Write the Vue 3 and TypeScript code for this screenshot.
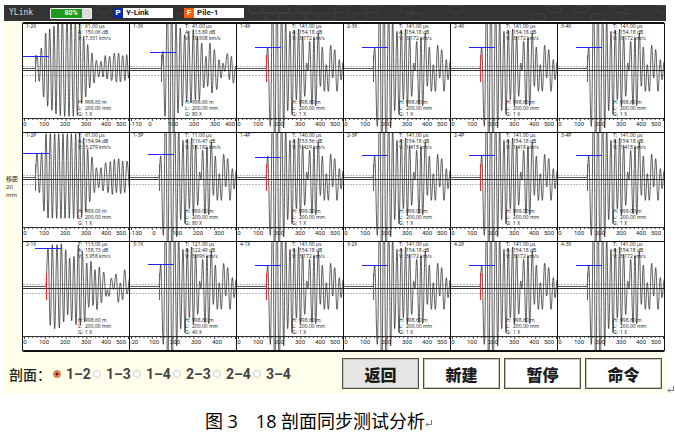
<script setup lang="ts">
import { ref } from 'vue'

type Extremum = [number, number]
interface Tick {
  x: number
  label: string
}
interface Channel {
  name: string
  time: string
  amp: string
  vel: string
  depth: string
  gain: string
  wave: string
  level: number
  levelX: number
  onset: number
  ticks: Tick[]
}

const W = 106
const MID = 46

/* Extrema of each trace: [position, amplitude], three units to a pixel. */
const waves: Record<string, Extremum[]> = {
  early: [[36, 3], [42, 40], [49, -37], [55, 63], [62, -84], [68, 108], [74, -112], [80, 120], [87, -124], [93, 128], [99, -135], [105, 160], [112, -140], [118, 165], [125, -142], [132, 165], [138, -142], [144, 160], [151, -142], [157, 150], [163, -139], [170, 133], [176, -102], [182, 98], [188, -84], [194, 73], [200, -57], [207, 48], [213, -42], [220, 26], [227, -24], [234, 23], [240, -24], [247, 40], [252, -30], [260, 38], [266, -35], [274, 48], [280, -39], [287, 48], [292, -39], [299, 40], [306, -35], [311, 43], [317, -27], [321, 0]],
  flat: [[36, 3], [42, 73], [49, -44], [56, 76], [63, -99], [69, 133], [75, -120], [82, 133], [88, -121], [95, 133], [101, -121], [107, 133], [114, -121], [120, 133], [126, -121], [133, 133], [139, -121], [145, 133], [152, -121], [158, 133], [164, -121], [170, 133], [176, -118], [182, 121], [188, -101], [194, 86], [200, -71], [207, 63], [214, -44], [220, 31], [227, -29], [234, 31], [240, -39], [248, 46], [255, -44], [262, 49], [268, -49], [274, 56], [280, -44], [287, 58], [293, -47], [299, 51], [305, -44], [312, 51], [321, -40]],
  late: [[68, 3], [75, 115], [82, -115], [88, 127], [95, -125], [102, 127], [109, -123], [115, 130], [122, -105], [128, 112], [134, -83], [140, 87], [146, -101], [153, 92], [159, -113], [166, 127], [172, -115], [178, 107], [185, -105], [191, 72], [197, -61], [204, 77], [210, -56], [216, 52], [222, -68], [229, 60], [235, -48], [242, 45], [249, -28], [253, -8], [258, -28], [265, 27], [272, -8], [279, 39], [286, -46], [292, 12], [299, -38], [305, 52], [312, -21], [321, 30]],
  near: [[94, 3], [99, 53], [105, -142], [112, 190], [119, -260], [125, 230], [131, -260], [138, 150], [144, -132], [151, 123], [157, -112], [164, 103], [170, -97], [176, 113], [183, -102], [190, 118], [196, -92], [202, 98], [208, -92], [215, 78], [221, -57], [228, 38], [233, -52], [240, 78], [246, -72], [253, 58], [260, -62], [267, 28], [273, -27], [279, 18], [284, -7], [292, 46], [298, -32], [304, 38], [310, -42], [317, 8], [321, -10]],
  cross: [[87, 3], [92, 66], [100, -172], [107, 230], [113, -270], [120, 270], [126, -270], [134, 190], [140, -177], [146, 150], [152, -125], [159, 113], [165, -137], [172, 116], [178, -92], [185, 120], [190, -112], [197, 98], [203, -82], [209, 18], [213, -6], [218, 83], [225, -107], [231, 93], [236, -110], [244, 108], [250, -52], [256, 66], [262, -67], [268, 13], [274, -67], [281, 71], [287, -27], [293, 58], [300, -67], [307, 28], [312, -32], [319, 23]],
}

function tracePath(points: Extremum[]): string {
  let px = points[0][0] / 3
  let py = MID - 1.5
  let d = `M0 ${py} H${px}`
  for (const [ux, uy] of points.slice(1)) {
    const x = ux / 3
    const y = MID - 1 - uy / 3
    const bend = (x - px) * 0.42
    d += ` C${(px + bend).toFixed(2)} ${py.toFixed(2)} ${(x - bend).toFixed(2)} ${y.toFixed(2)} ${x.toFixed(2)} ${y.toFixed(2)}`
    px = x
    py = y
  }
  return d
}

const paths = Object.fromEntries(Object.entries(waves).map(([key, pts]) => [key, tracePath(pts)]))

const scale = (pairs: [number, string][]): Tick[] => pairs.map(([x, label]) => ({ x, label }))
const standard = scale([[2, '0'], [21, '100'], [42, '200'], [63, '300'], [83, '400'], [98, '500']])

function channel(name: string, time: string, amp: string, vel: string, depth: string, extra: Partial<Channel> = {}): Channel {
  return { name, time, amp, vel, depth, gain: '1 X', wave: 'cross', level: 23, levelX: 18, onset: 29, ticks: standard, ...extra }
}

const channels: Channel[] = [
  channel('1-2X', '61.00', '150.06', '7.331', '998.60', { wave: 'early', level: 32, levelX: 0, onset: 12 }),
  channel('1-3X', '41.00', '113.89', '10.908', '998.60', { wave: 'near', gain: '80 X', level: 28, levelX: 20, onset: 31, ticks: scale([[6, '-110'], [20, '0'], [43, '100'], [64, '200'], [85, '300'], [100, '400']]) }),
  channel('1-4X', '141.00', '154.18', '3.172', '998.60'),
  channel('2-3X', '141.00', '154.18', '3.172', '998.60'),
  channel('2-4X', '141.00', '154.18', '3.172', '998.60'),
  channel('3-4X', '141.00', '154.18', '3.172', '998.60'),
  channel('1-2P', '61.00', '154.94', '3.279', '999.00', { wave: 'flat', level: 20, levelX: 0, onset: 12 }),
  channel('1-3P', '11.00', '116.47', '18.182', '999.00', { gain: '80 X', level: 21, ticks: scale([[6, '-130'], [24, '0'], [47, '100'], [68, '200'], [89, '300']]) }),
  channel('1-4P', '140.00', '153.56', '1.429', '999.00', { level: 24 }),
  channel('2-3P', '141.00', '154.18', '1.418', '999.00', { level: 22 }),
  channel('2-4P', '141.00', '154.18', '1.418', '999.00', { level: 22 }),
  channel('3-4P', '141.00', '154.18', '1.418', '999.00', { level: 22 }),
  channel('2-1X', '113.00', '158.73', '3.958', '998.60', { wave: 'late', level: 6, levelX: 12, onset: 23 }),
  channel('3-1X', '121.00', '122.49', '3.696', '998.60', { gain: '40 X', level: 22, ticks: scale([[4, '-20'], [24, '100'], [45, '200'], [66, '300'], [87, '400']]) }),
  channel('4-1X', '141.00', '154.18', '3.172', '998.60'),
  channel('3-2X', '141.00', '154.18', '3.172', '998.60'),
  channel('4-2X', '141.00', '154.18', '3.172', '998.60'),
  channel('4-3X', '141.00', '154.18', '3.172', '998.60'),
]

function readout(c: Channel): { key: string; value: string; y: number }[] {
  return [
    { key: 'T:', value: `${c.time} µs`, y: 4 },
    { key: 'A:', value: `${c.amp} dB`, y: 10 },
    { key: 'V:', value: `${c.vel} km/s`, y: 16 },
    { key: 'H:', value: `${c.depth} m`, y: 80 },
    { key: 'L:', value: '200.00 mm', y: 86 },
    { key: 'G:', value: c.gain, y: 92 },
  ]
}

const minorTicks = Array.from({ length: 26 }, (_, i) => i)

const sections = ['1–2', '1–3', '1–4', '2–3', '2–4', '3–4']
const section = ref('1–2')
const actions = ['返回', '新建', '暂停', '命令']

/* Outlined tiles in the header's texture: [x, row]. */
const tiles: [number, number][] = [
  [97, 0], [176, 1], [248, 0], [252, 1], [262, 0], [266, 1], [275, 0], [279, 1], [292, 1], [297, 0], [306, 1], [322, 1],
  [335, 0], [353, 1], [365, 0], [400, 0], [409, 1], [449, 0], [531, 1], [547, 0], [574, 0], [591, 1], [612, 0], [622, 1], [657, 0],
]
</script>

<template>
  <main class="page">
    <div class="figure">
      <section class="device">
        <header class="bar">
          <svg class="texture" viewBox="0 0 662 16" preserveAspectRatio="xMinYMin slice" aria-hidden="true">
            <rect v-for="([x, row], i) in tiles" :key="i" :x="x - 3.5" :y="row * 8 + 0.5" width="13" height="7" rx="1" />
          </svg>
          <span class="brand">YLink</span>
          <span class="battery"><span class="charge"></span><span class="percent">80%</span></span>
          <span class="tag project"><b>P</b><span>Y-Link</span></span>
          <span class="tag file"><b>F</b><span>Pile-1</span></span>
        </header>

        <div class="body">
          <div class="step"><span>移距</span><span>20</span><span>mm</span></div>
          <div class="plots">
            <svg v-for="c in channels" :key="c.name" class="plot" :viewBox="`0 0 ${W} 108`" role="img" :aria-label="c.name">
              <line class="guide" x1="0" x2="106" y1="42.5" y2="42.5" />
              <line class="guide" x1="0" x2="106" y1="51.5" y2="51.5" />
              <line class="axis" x1="0" x2="106" y1="46.5" y2="46.5" />
              <line class="axis" x1="0" x2="106" y1="94.5" y2="94.5" />
              <path class="ticks" :d="minorTicks.map((i) => `M${i * 4.16 + 1.5} 95v${i % 5 ? 1 : 2}`).join('')" />
              <text v-for="t in c.ticks" :key="t.label" class="scale" :x="t.x" y="102">{{ t.label }}</text>
              <path class="trace" :d="paths[c.wave]" />
              <line class="onset" :x1="c.onset + 0.5" :x2="c.onset + 0.5" y1="31" y2="58" />
              <line class="level" :x1="c.levelX" :x2="c.levelX + 26" :y1="c.level + 0.5" :y2="c.level + 0.5" />
              <text class="small" x="3" y="4">{{ c.name }}</text>
              <template v-for="r in readout(c)" :key="r.key">
                <text class="small" x="55" :y="r.y">{{ r.key }}</text>
                <text class="small" x="62" :y="r.y">{{ r.value }}</text>
              </template>
            </svg>
          </div>
        </div>

        <footer class="controls">
          <div class="sections" role="radiogroup" aria-labelledby="sections-title">
            <span id="sections-title" class="title">剖面：</span>
            <label v-for="s in sections" :key="s">
              <input v-model="section" type="radio" name="section" :value="s" />{{ s }}
            </label>
          </div>
          <div class="actions">
            <button v-for="a in actions" :key="a" type="button" :class="{ active: a === '返回' }">{{ a }}</button>
          </div>
        </footer>
      </section>
      <svg class="mark" viewBox="0 0 7 8" aria-hidden="true"><path d="M6.5 0v4.5H1M3 2.5l-2 2 2 2" /></svg>
    </div>
    <p class="caption">
      图 3　18 剖面同步测试分析<svg class="mark" viewBox="0 0 7 8" aria-hidden="true"><path d="M6.5 0v4.5H1M3 2.5l-2 2 2 2" /></svg>
    </p>
  </main>
</template>

<style>
body {
  margin: 0;
  background: #fff;
}
</style>

<style scoped>
.page {
  padding: 5px 1px 0 4px;
  font-family: "Open Sans", "Noto Sans CJK SC", sans-serif;
}
.figure {
  display: flex;
  align-items: flex-end;
  gap: 1px;
}
.device {
  flex: 1;
  min-width: 0;
  background: #ffffec;
}
.bar {
  position: relative;
  display: flex;
  align-items: center;
  height: 16px;
  padding-left: 5px;
  background: #333;
  overflow: hidden;
}
.texture {
  position: absolute;
  inset: 0;
  width: 100%;
  height: 100%;
}
.texture rect {
  fill: none;
  stroke: #404040;
}
.brand {
  position: relative;
  width: 41px;
  color: #ddd;
  font: 8px/16px "DejaVu Sans Mono", monospace;
}
.battery {
  position: relative;
  display: flex;
  width: 40px;
  height: 9px;
  border: 1px solid #f4f4f4;
  border-radius: 1px;
  background: #ddd;
}
.charge {
  width: 77%;
  background: #1f9a1c;
}
.percent {
  position: absolute;
  inset: 0;
  color: #e8ffe8;
  font: bold 7px/9px Roboto, sans-serif;
  text-align: center;
}
.tag {
  position: relative;
  display: flex;
  width: 60px;
  height: 10px;
  margin-left: 21px;
  font: bold 8px/10px Roboto, sans-serif;
}
.file {
  margin-left: 11px;
}
.tag b {
  width: 10px;
  background: #0d2ba6;
  color: #fff;
  text-align: center;
}
.file b {
  background: #ff5d0a;
}
.tag span {
  flex: 1;
  padding-left: 3px;
  background: #fff;
  color: #222;
}
.body {
  display: flex;
  padding: 1px 1px 0 0;
}
.step {
  display: flex;
  flex: none;
  flex-direction: column;
  justify-content: center;
  width: 16px;
  padding-left: 2px;
  color: #222;
  font-size: 6px;
  line-height: 8px;
}
.plots {
  flex: 1;
  display: grid;
  grid-template-columns: repeat(6, 1fr);
  gap: 1px;
  border: solid #111;
  border-width: 2px 1px;
  border-radius: 2px;
  background: #111;
}
.plot {
  display: block;
  width: 100%;
  background: #fff;
}
.small {
  fill: #111;
  font-size: 5px;
}
.scale {
  fill: #222;
  font: 6px Roboto, sans-serif;
  text-anchor: middle;
}
.trace {
  fill: none;
  stroke: #1c1c1c;
  stroke-width: 0.7;
}
.axis {
  stroke: #333;
}
.ticks {
  stroke: #444;
}
.guide {
  stroke: #bbb;
  stroke-dasharray: 2 1;
}
.onset {
  stroke: #f22;
  shape-rendering: crispEdges;
}
.level {
  stroke: #22f;
  shape-rendering: crispEdges;
}
.controls {
  display: flex;
  align-items: center;
  justify-content: space-between;
  padding: 6px 4px 5px 5px;
}
.sections {
  display: flex;
  align-items: center;
  gap: 4px;
}
.title {
  width: 40px;
  color: #222;
  font: 500 14px/20px "Noto Sans CJK SC", sans-serif;
  white-space: nowrap;
}
.sections label {
  display: flex;
  align-items: center;
  gap: 5px;
  width: 36px;
  color: #444;
  font: bold 14px/20px Roboto, sans-serif;
  white-space: nowrap;
}
.sections input {
  appearance: none;
  flex: none;
  width: 8px;
  height: 8px;
  margin: 0;
  border: 1px solid #ccc;
  border-radius: 50%;
  background: #fff;
}
.sections input:checked {
  border-color: #d8693c;
  background: radial-gradient(circle, #5a2814 0 1px, #f0875a 2px);
}
.actions {
  display: flex;
  gap: 4px;
}
.actions button {
  width: 77px;
  height: 31px;
  padding: 0;
  border: 1px solid #4c4c48;
  outline: 1px solid #c9c9bd;
  outline-offset: -2px;
  background: #fff;
  color: #1c1c1c;
  font: 900 16px/20px "Noto Sans CJK SC", sans-serif;
}
.actions .active {
  background: #e5e5e5;
}
.mark {
  flex: none;
  width: 7px;
  height: 8px;
  fill: none;
  stroke: #777;
}
.caption {
  margin: 0;
  padding: 13px 41px 0 0;
  color: #000;
  font-size: 18px;
  line-height: 28px;
  text-align: center;
}
</style>
